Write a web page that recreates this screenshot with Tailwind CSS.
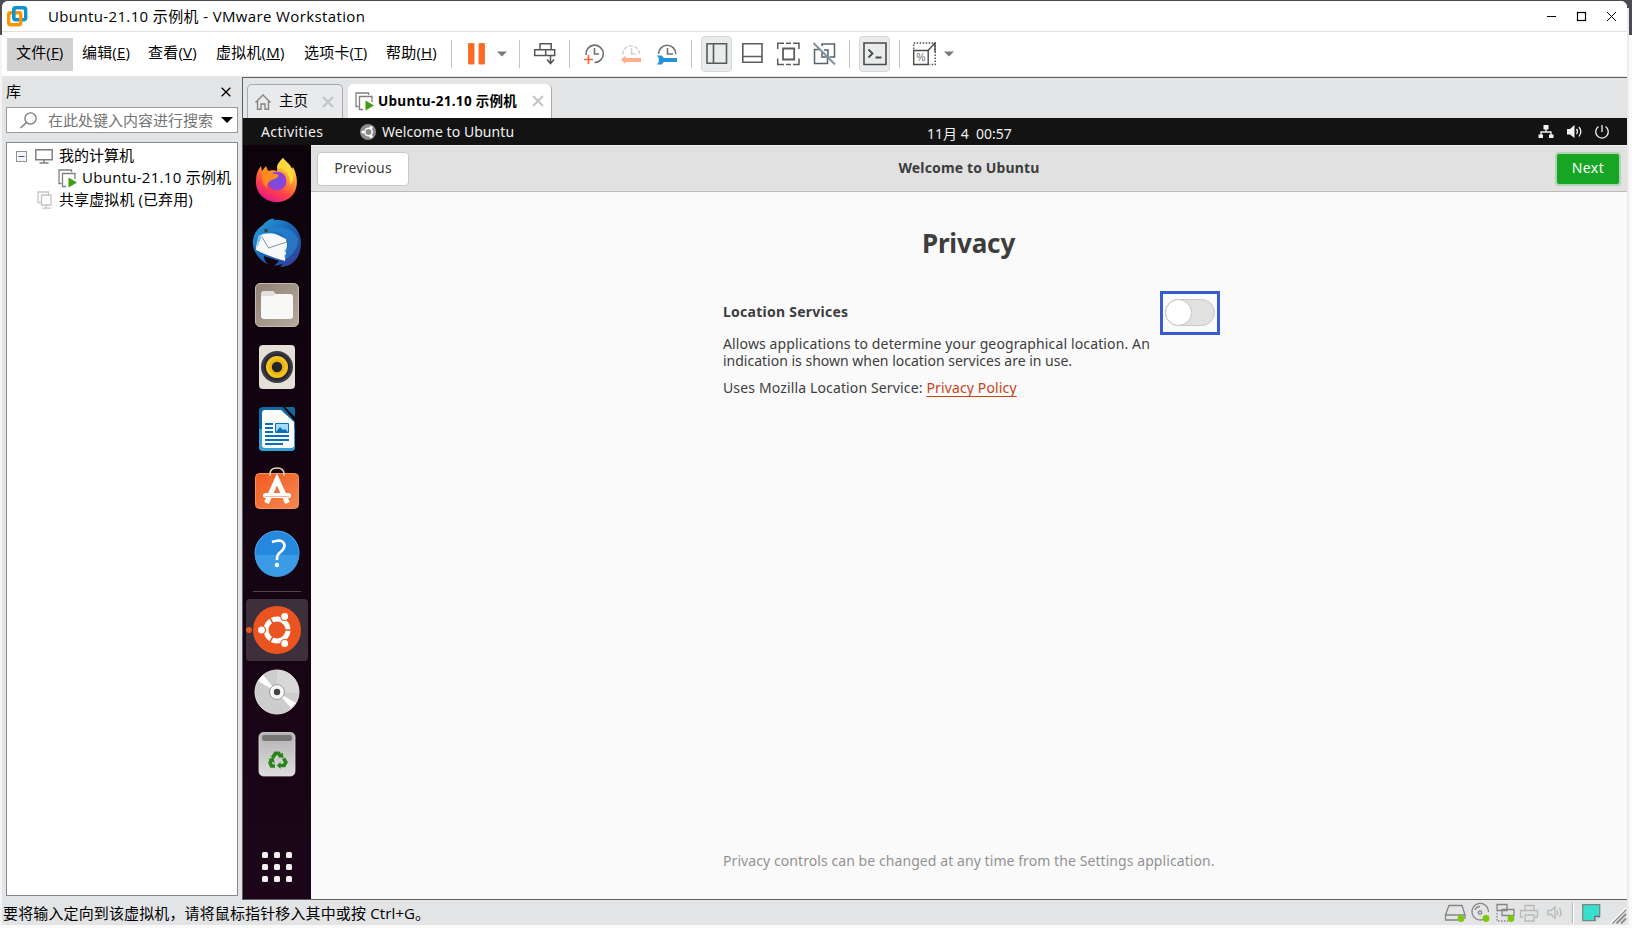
<!DOCTYPE html>
<html lang="zh-CN">
<head>
<meta charset="utf-8">
<title>Ubuntu-21.10 示例机 - VMware Workstation</title>
<script src="https://cdn.jsdelivr.net/npm/@tailwindcss/browser@4"></script>
</head>
<body class="w-[1632px] h-[928px] overflow-hidden bg-[#fafafa] font-['Open_Sans','Noto_Sans_CJK_SC',sans-serif] text-[15px] text-black">
<div class="relative flex h-[928px] w-[1632px] flex-col">
  <div class="absolute left-0 top-0 h-[35px] w-full bg-[#4c4a52]"></div>
  <div class="absolute left-0 top-[35px] h-[890px] w-[3px] bg-[#f4f4f5]"></div>
  <div class="absolute left-[1627px] top-[8px] h-[917px] w-[2px] bg-[#ececee]"></div>

  <div class="relative ml-[2px] mt-px flex h-[924px] w-[1625px] flex-col rounded-t-[6px] bg-[#e3e4e6]">
    <!-- title bar -->
    <header class="flex h-[31px] shrink-0 items-center rounded-t-[6px] border-b border-[#e0e0e0] bg-white">
      <svg class="ml-[5px] size-[21px]" viewBox="0 0 21 21" fill="none" stroke-width="3.4"><rect x="6.7" y="1.7" width="12" height="12" rx="2" stroke="#0e93d2"/><rect x="1.7" y="6.7" width="12" height="12" rx="2" stroke="#f89406"/><path d="M6.7 12V3.5" stroke="#0e93d2"/><path d="M10.5 6.7h3.2v4" stroke="#f89406" stroke-width="2"/></svg>
      <h1 class="ml-[20px] whitespace-nowrap text-[15px] leading-[20px] tracking-[0.37px]">Ubuntu-21.10 示例机 - VMware Workstation</h1>
      <svg class="ml-auto mr-[10px] h-[11px] w-[71px]" viewBox="0 0 71 11" fill="none" stroke="#000"><path d="M1 5.5h9"/><rect x="31.5" y="1.5" width="8" height="8" stroke-width="1.2"/><path d="m61 1 9 9m0-9-9 9"/></svg>
    </header>

    <!-- menu and toolbar -->
    <nav class="flex h-[44px] shrink-0 items-center bg-white whitespace-nowrap">
      <div class="ml-[5px] flex h-[33px] w-[66px] items-center bg-[#d1d1d1] pb-[3px] pl-[9px] tracking-[0.15px]">文件(<u>F</u>)</div>
      <div class="w-[66px] pb-[3px] pl-[9px] tracking-[0.15px]">编辑(<u>E</u>)</div>
      <div class="w-[68px] pb-[3px] pl-[9px] tracking-[0.2px]">查看(<u>V</u>)</div>
      <div class="w-[88px] pb-[3px] pl-[9px] tracking-[0.2px]">虚拟机(<u>M</u>)</div>
      <div class="w-[82px] pb-[3px] pl-[9px] tracking-[0.2px]">选项卡(<u>T</u>)</div>
      <div class="w-[70px] pb-[3px] pl-[9px] tracking-[0.2px]">帮助(<u>H</u>)</div>
      <i class="ml-[4px] h-[28px] w-px bg-[#c4c4c4]"></i>
      <svg class="ml-[14px] size-[24px]" viewBox="0 0 24 24" fill="#ff6a20"><path d="M2.500 1.500h5.500v20.500h-5.500zM13 1.500h5.500v20.500h-5.500z" stroke="#e97b43"/></svg>
      <svg class="ml-[7px] h-[6px] w-[10px]" viewBox="0 0 10 6"><path d="M0 .5h10L5 5.500z" fill="#7a7a7a"/></svg>
      <i class="ml-[12px] h-[28px] w-px bg-[#c4c4c4]"></i>
      <svg class="ml-[12px] size-[24px]" viewBox="0 0 24 24" fill="none" stroke="#555" stroke-width="1.500"><path d="M8 1.700h11.200v6H8zM2.700 7.700h11v5.800h-11zM13.700 7.700h9v5.800h-9zM18.500 14v7M15 17.500l3.500 4 3.500-4"/></svg>
      <i class="ml-[13px] h-[28px] w-px bg-[#c4c4c4]"></i>
      <svg class="ml-[12px] size-[24px]" viewBox="0 0 24 24" fill="none" stroke="#707070" stroke-width="1.600"><path d="M4 13a8.700 8.700 0 1 1 8.500 7.500M12.500 6v6H17"/><path d="M2 17.500h9M6.500 13v9" stroke="#f26a32" stroke-width="1.700"/></svg>
      <svg class="ml-[13px] size-[24px]" viewBox="0 0 24 24" fill="none" stroke="#d3d3d3" stroke-width="1.600"><path d="M3.500 12.500a8.500 8.500 0 0 1 17 0" stroke-dasharray="4 1.500"/><path d="M12.500 6v6H17"/><path d="M2 17.500 6.500 13.500v2.500H22v4H6.500V22z" fill="#ffae8b" stroke="none"/></svg>
      <svg class="ml-[12px] size-[24px]" viewBox="0 0 24 24" fill="none" stroke="#707070" stroke-width="1.600"><path d="M3.500 12a8.700 8.700 0 0 1 17.400 0M12.500 6v6H18"/><path d="M1.800 13.500h5l2 2.500H22v4H8.800l-2 2.500h-5l2-2.500v-4z" fill="#2593d5" stroke="none"/></svg>
      <i class="ml-[12px] h-[28px] w-px bg-[#c4c4c4]"></i>
      <div class="ml-[9px] flex h-[36px] w-[31px] items-center justify-center rounded-[4px] border border-[#d4d6d8] bg-[#e9ebed]"><svg class="size-[24px] shrink-0" viewBox="0 0 24 24" fill="none" stroke="#555a56" stroke-width="1.600"><path d="M2 1.800h19.500v19.500H2zM8.500 2v19"/></svg></div>
      <svg class="ml-[8px] size-[24px]" viewBox="0 0 24 24" fill="none" stroke="#5c5c5c" stroke-width="1.600"><path d="M2.800 1.800h19.200v18.500h-19.200zM3 14.500h19"/></svg>
      <svg class="ml-[12px] size-[24px]" viewBox="0 0 24 24" fill="none" stroke="#5c5c5c" stroke-width="1.500"><path d="M7 6.500h11.200v11H7z" stroke-width="1.800"/><path d="M10 1.200h5M10 22.500h5M1.700 7V1.200H8M17 1.200h6V7M23 16.500v6H17M8 22.500H1.700v-6"/></svg>
      <svg class="ml-[12px] size-[24px]" viewBox="0 0 24 24" fill="none" stroke="#56646c" stroke-width="1.500"><path d="M10 4V2h12.500v13h-5M8 7.500H2.500v14h13V16M10 10v5h6V8h-4"/><path d="m1.500 1 21.500 21.500" stroke="#8293a0" stroke-width="2"/></svg>
      <i class="ml-[13px] h-[28px] w-px bg-[#c4c4c4]"></i>
      <div class="ml-[9px] flex h-[36px] w-[31px] items-center justify-center rounded-[4px] border border-[#d4d6d8] bg-[#e9ebed]"><svg class="size-[24px] shrink-0" viewBox="0 0 24 24" fill="none" stroke="#4a4a4a" stroke-width="1.600"><path d="M1 1h22v21.500H1z"/><path d="m5.500 7.500 4 4-4 4M12.500 15.500h6" stroke-width="1.800"/></svg></div>
      <i class="ml-[9px] h-[28px] w-px bg-[#c4c4c4]"></i>
      <svg class="ml-[12px] size-[24px]" viewBox="0 0 24 24" fill="none" stroke="#4a4a4a" stroke-width="1.400"><path d="M1.700 8.500h14.500v14H1.700z"/><path d="M1.700 7V1h21.500v21.500H17.500" stroke-dasharray="1.500 1.500"/><path d="m16 8.500 7-7.500v9"/><text x="4.500" y="19" font-size="10" fill="#666" stroke="none" font-family="Liberation Sans">%</text></svg>
      <svg class="ml-[8px] h-[6px] w-[10px]" viewBox="0 0 10 6"><path d="M0 .5h10L5 5.500z" fill="#7a7a7a"/></svg>
    </nav>

    <main class="flex h-[824px] shrink-0">
      <!-- library panel -->
      <aside class="flex w-[240px] shrink-0 flex-col pl-[4px]">
        <div class="flex h-[31px] items-center justify-between pr-[11px]"><span class="pb-px leading-[20px]">库</span><svg class="size-[10px]" viewBox="0 0 10 10" stroke="#000" stroke-width="1.300"><path d="m.7.700 8.600 8.600m0-8.600L.7 9.300"/></svg></div>
        <div class="flex h-[26px] w-[232px] shrink-0 items-center border border-[#999] bg-white text-[#757575]">
          <svg class="ml-[13px] size-[17px]" viewBox="0 0 17 17" fill="none" stroke="#777" stroke-width="1.300"><circle cx="10.500" cy="6.500" r="5.600"/><path d="m6.500 10.500-6 5.500"/></svg>
          <span class="ml-[11px] whitespace-nowrap leading-[20px]">在此处键入内容进行搜索</span>
          <svg class="ml-[8px] h-[6px] w-[12px] shrink-0" viewBox="0 0 12 6"><path d="M0 0h12L6 6z" fill="#000"/></svg>
        </div>
        <div class="mt-[9px] flex h-[754px] w-[232px] shrink-0 flex-col border border-[#828790] bg-white pt-[2px] whitespace-nowrap">
          <div class="flex h-[22px] items-center">
            <svg class="ml-[9px] size-[11px]" viewBox="0 0 11 11" fill="#f5f5f5"><rect x=".5" y=".5" width="10" height="10" stroke="#919191"/><path d="M2.500 5.500h6" stroke="#3a56a5"/></svg>
            <svg class="ml-[8px] h-[15px] w-[18px]" viewBox="0 0 18 15" fill="none" stroke="#808080" stroke-width="1.500"><path d="M.8.800h16.400v10H.8zM9 11v3M4.500 14h9"/></svg>
            <span class="ml-[6px] pb-[2px]">我的计算机</span>
          </div>
          <div class="flex h-[22px] items-center">
            <svg class="ml-[51px] size-[19px]" viewBox="0 0 19 19" fill="none" stroke="#808080" stroke-width="1.300"><path d="M3.500 14.500H1V1h12.500v2M8 17.500H4.500V4.500H17V10"/><path d="M10.500 8.500 19 13.500l-8.500 5z" fill="#3f9c13" stroke="none"/></svg>
            <span class="ml-[5px] pb-[2px] tracking-[0.28px]">Ubuntu-21.10 示例机</span>
          </div>
          <div class="flex h-[22px] items-center">
            <svg class="ml-[30px] size-[18px]" viewBox="0 0 18 18" fill="none" stroke="#c4c4c4" stroke-width="1.300"><path d="M4 11.500H1V1h10.500v2.500M4.500 4H14v10H4.500zM9 14v3M5 17.200h9"/></svg>
            <span class="ml-[4px] pb-[2px] tracking-[0.1px]">共享虚拟机 (已弃用)</span>
          </div>
        </div>
      </aside>

      <!-- virtual machine pane -->
      <section class="mt-px flex w-[1385px] flex-col border-b border-l border-t border-[#5f5f63]">
        <div class="flex h-[40px] shrink-0 items-end">
          <div class="ml-[4px] flex h-[34px] w-[96px] items-center rounded-t-[5px] border border-b-0 border-[#a6a9ad] bg-[#e9eaec]">
            <svg class="ml-[7px] size-[16px] shrink-0" viewBox="0 0 16 16" fill="none" stroke="#858585" stroke-width="1.400"><path d="M.5 8.500 8 1l7.500 7.500M2.500 7v8.300h3.500V10h4v5.300h3.500V7"/></svg>
            <span class="ml-[8px] w-[29px] pb-[2px] text-[14.500px] whitespace-nowrap">主页</span>
            <svg class="ml-[14px] size-[12px] shrink-0" viewBox="0 0 12 12" stroke="#c2c4c6" stroke-width="2"><path d="m1 1 10 10M11 1 1 11"/></svg>
          </div>
          <div class="ml-[5px] flex h-[34px] w-[204px] items-center rounded-t-[5px] border-r border-[#a6a9ad] bg-white">
            <svg class="ml-[7px] size-[19px] shrink-0" viewBox="0 0 19 19" fill="none" stroke="#808080" stroke-width="1.300"><path d="M3.500 14.500H1V1h12.500v2M8 17.500H4.500V4.500H17V10"/><path d="M10.500 8.500 19 13.500l-8.500 5z" fill="#3f9c13" stroke="none"/></svg>
            <span class="ml-[4px] w-[142px] text-[13.500px] font-bold tracking-[0.3px] whitespace-nowrap">Ubuntu-21.10 示例机</span>
            <svg class="ml-[12px] size-[12px] shrink-0" viewBox="0 0 12 12" stroke="#c2c4c6" stroke-width="2"><path d="m1 1 10 10M11 1 1 11"/></svg>
          </div>
        </div>

        <div class="flex h-[781px] flex-col font-['Noto_Sans','Noto_Sans_CJK_SC',sans-serif] text-[14px] text-[#3d3d3d]">
          <div class="relative flex h-[27px] shrink-0 items-center bg-[#131313] text-[#f0f0f0] whitespace-nowrap">
            <span class="ml-[18px] w-[64px] tracking-[0.4px]">Activities</span>
            <svg class="ml-[35px] size-[16px]" viewBox="0 0 16 16" fill="none"><circle cx="8" cy="8" r="8" fill="#8b8b8b"/><circle cx="8.500" cy="8" r="3.700" stroke="#fff" stroke-width="1.500"/><circle cx="3" cy="8" r="1.600" fill="#fff"/><circle cx="11" cy="3.500" r="1.600" fill="#fff"/><circle cx="11" cy="12.500" r="1.600" fill="#fff"/></svg>
            <span class="ml-[6px] tracking-[0.06px]">Welcome to Ubuntu</span>
            <span class="absolute left-[684px] top-[6px] leading-[20px] whitespace-pre">11月 4  00:57</span>
            <svg class="ml-auto mr-[17px] h-[16px] w-[72px]" viewBox="0 0 72 16" fill="none" stroke="#f2f2f2" stroke-width="1.300"><path d="M5.500 1h5v4.500h-5zM.5 10.500h4.500v3.500H.5zM11 10.500h4.500v3.500H11z" fill="#f2f2f2" stroke="none"/><path d="M8 5v3M3 11V8h10v3"/><path d="M29 5h3l4.500-4v13L32 10.500h-3z" fill="#f2f2f2" stroke="none"/><path d="M38.500 5q2 2.500 0 5M41 3q3.500 4.500 0 9.500"/><path d="M60.500 2.500a6.300 6.300 0 1 0 7 0M64 1v7"/></svg>
          </div>
          <div class="flex h-[754px]">
            <!-- dock -->
            <div class="flex w-[68px] shrink-0 flex-col items-center bg-linear-to-b from-[#0d030b] to-[#1c0519] pt-[5px]">
              <svg class="size-[62px] shrink-0" viewBox="0 0 62 62"><defs><linearGradient id="ff" x1=".8" y1="0" x2=".3" y2="1"><stop stop-color="#fff44f"/><stop offset=".4" stop-color="#ff9a2b"/><stop offset=".7" stop-color="#ff4347"/><stop offset="1" stop-color="#e2158a"/></linearGradient><radialGradient id="fp"><stop stop-color="#6a52e8"/><stop offset="1" stop-color="#9a3fcf"/></radialGradient></defs><path d="M37 8c2 3 7 6 9 11l1-2c8 15 4 33-14 35-15 1-24-10-23-22 0-6 2-10 5-14l1 5 4-5 2 5c4-1 6-1 9 0 0-5 3-10 6-13z" fill="url(#ff)"/><circle cx="31" cy="31" r="9.500" fill="url(#fp)"/><path d="M17 21c4-2 8 1 11 3 4 0 6 1 3 4-3 2-6 1-8 4-2 2-3 4-1 7-6-5-7-10-5-18z" fill="#ff8a20"/><path d="M37 8c2 3 7 6 9 11 3 6 1 12-2 16 0-8-2-12-6-15-3-3-9-1-7-2 0-4 3-7 6-10z" fill="#ffd83c"/></svg>
              <svg class="size-[62px] shrink-0" viewBox="0 0 62 62"><defs><linearGradient id="tb" x1="0" y1="0" x2="1" y2="1"><stop stop-color="#2da7e0"/><stop offset=".45" stop-color="#1769b9"/><stop offset="1" stop-color="#393996"/></linearGradient></defs><path d="M17 13c3-4 8-7 12-6l-2 1.500c15-3 28 8 28 22.500 0 14-8 24-21 24l3-3-9 2 5-5-15-5c0 5 3 7 5 9-11-5-17-15-16-25 1-7 5-12 10-15z" fill="url(#tb)"/><path d="M10 38q0-9 5-15l2-1q10-2 15 1l8 4 1 6-2 16q-15-4-29-11z" fill="#f7f9fb"/><path d="m16 25 6.500 11 18-6" fill="none" stroke="#8a9299"/><path d="M18 21c8-4 16-1 22 5 3 4 0 8 2 10l-4 3 3 2-3 3 2 3c8-5 12-11 12-20-5-12-20-15-34-6z" fill="#2a83cf" opacity=".7"/><path d="m11 36 1-12 4-2-1 4z" fill="#79c7ee"/><circle cx="20" cy="18.500" r="1.700" fill="#3a3a3b"/></svg>
              <svg class="size-[62px] shrink-0" viewBox="0 0 62 62"><defs><linearGradient id="fi" x2="1" y2="1"><stop stop-color="#8f8175"/><stop offset="1" stop-color="#b7aa9d"/></linearGradient></defs><rect x="9.500" y="9.500" width="43" height="43" rx="4.500" fill="url(#fi)" stroke="#c4bcb2"/><path d="M15 20q0-3 3-3h9l3 3h14v8H15z" fill="#e4e0db"/><path d="M15 24q0-2 3-2h9l3-2h14q3 0 3 3v19q0 3-3 3H18q-3 0-3-3z" fill="#f8f8f7"/></svg>
              <svg class="size-[62px] shrink-0" viewBox="0 0 62 62"><rect x="13" y="9" width="36" height="44" rx="4" fill="#e4e0d8"/><circle cx="31" cy="31" r="16" fill="#3a3b45"/><circle cx="31" cy="31" r="13.500" fill="#282932"/><circle cx="31" cy="31" r="11" fill="#f4c522"/><circle cx="31" cy="31" r="8" fill="#e8b611"/><circle cx="31" cy="31" r="5.200" fill="#23242c"/></svg>
              <svg class="size-[62px] shrink-0" viewBox="0 0 62 62"><rect x="13" y="9" width="36" height="44" rx="4" fill="#0f6ba5"/><path d="M13 31h36v18q0 4-4 4H17q-4 0-4-4z" fill="#389fd3"/><path d="M36 8h14v17z" fill="#10050e"/><path d="M39 9h8q2 0 2 2v8z" fill="#126b9e"/><path d="M16 15q0-3 3-3h16l13 12v23q0 3-3 3H19q-3 0-3-3z" fill="#fafafa"/><path d="M19 26h8M19 30h8M19 34h8M19 38h24M19 42h24M19 46h18" stroke="#0870b8" stroke-width="2"/><path d="M29.500 25.500h13v9h-13z" fill="#a5d8f4" stroke="#0870b8"/><path d="m30 34 4-5 3 3 2-1 3 3z" fill="#0870b8"/></svg>
              <svg class="size-[62px] shrink-0" viewBox="0 -2 62 62"><defs><linearGradient id="sw" x2="1" y2="1"><stop stop-color="#f45a20"/><stop offset="1" stop-color="#f38751"/></linearGradient></defs><rect x="9.500" y="11.500" width="43" height="35" rx="4" fill="url(#sw)" stroke="#f7925f"/><path d="M24 14v-2q0-6 7-6t7 6v2" fill="none" stroke="#f3d7b4" stroke-width="1.500"/><path d="M20.500 41 31 17.500 41.500 41" fill="none" stroke="#fff" stroke-width="5"/><rect x="17" y="31" width="28" height="5" rx="2.500" fill="#fff"/><path d="M19 34.500h24" stroke="#f3a581" stroke-width=".8"/></svg>
              <svg class="size-[62px] shrink-0" viewBox="0 0 62 62"><circle cx="31" cy="31" r="22" fill="#2588df" stroke="#55acef"/><path d="M9 33h44a22 22 0 0 1-44 0z" fill="#3b9be6"/><path d="M26 20q11-4 12.500 3 0 4-4 7-4 3-3.500 8" fill="none" stroke="#fff" stroke-width="2.700"/><circle cx="31" cy="43" r="2.200" fill="#fff"/></svg>
              <i class="mt-[7px] h-px w-[48px] shrink-0 bg-[#514650]"></i>
              <svg class="mt-[7px] size-[62px] shrink-0 rounded-[4px] bg-[#3d303b]" viewBox="0 0 62 62"><circle cx="3" cy="31" r="3" fill="#e95420"/><circle cx="31" cy="31" r="24" fill="#e95420"/><circle cx="31" cy="31" r="11" fill="none" stroke="#fff" stroke-width="5"/><path d="M36 31h10M28.500 27 23 17.500M28.500 35 23 44.500" stroke="#e95420" stroke-width="1.500"/><g fill="#fff" stroke="#e95420" stroke-width="1.200"><circle cx="15.500" cy="31" r="4"/><circle cx="38.700" cy="17.500" r="4"/><circle cx="38.700" cy="44.500" r="4"/></g></svg>
              <svg class="size-[62px] shrink-0" viewBox="0 0 62 62"><circle cx="31" cy="31" r="22" fill="#cdcdcd" stroke="#e2e2e2"/><path d="M31 31V9a22 22 0 0 1 22 23z" fill="#d8d8d8"/><path d="M31 31 12 20l5-6zM31 31l19 11-5 5z" fill="#fff"/><circle cx="31" cy="31" r="7.500" fill="#f7f7f7" stroke="#a39a94"/><circle cx="31" cy="31" r="3.200" fill="#444"/></svg>
              <svg class="size-[62px] shrink-0" viewBox="0 0 62 62"><defs><linearGradient id="tr" x2="0" y2="1"><stop stop-color="#b2b2b2"/><stop offset="1" stop-color="#dedede"/></linearGradient></defs><rect x="13" y="9.500" width="36" height="43.500" rx="4.500" fill="url(#tr)" stroke="#e0e0e0" stroke-width=".8"/><rect x="16" y="12" width="30" height="6" rx="2.500" fill="#767876"/><g transform="translate(3.400 3.800) scale(.9)"><path d="m25.500 34.500 3.500-5h3.500l2 3M38 35l2.500 4.500-2 3.500H34M28.500 43.500h-4L23 40l1.500-3" fill="none" stroke="#288619" stroke-width="4"/><path d="m32 34 6 .5-1-6zM34.500 39v8l-4-4zM21 35.500l6-1 1 6z" fill="#288619"/></g></svg>
              <div class="mt-[67px] grid grid-cols-3 gap-[6px]">
                <i class="size-[6px] rounded-[1.500px] bg-[#f2f0ee]"></i><i class="size-[6px] rounded-[1.500px] bg-[#f2f0ee]"></i><i class="size-[6px] rounded-[1.500px] bg-[#f2f0ee]"></i>
                <i class="size-[6px] rounded-[1.500px] bg-[#f2f0ee]"></i><i class="size-[6px] rounded-[1.500px] bg-[#f2f0ee]"></i><i class="size-[6px] rounded-[1.500px] bg-[#f2f0ee]"></i>
                <i class="size-[6px] rounded-[1.500px] bg-[#f2f0ee]"></i><i class="size-[6px] rounded-[1.500px] bg-[#f2f0ee]"></i><i class="size-[6px] rounded-[1.500px] bg-[#f2f0ee]"></i>
              </div>
            </div>
            <!-- welcome window -->
            <div class="flex w-[1316px] flex-col bg-[#fafafa]">
              <div class="grid h-[47px] shrink-0 grid-cols-3 items-center border-b border-t border-b-[#bcbcbc] border-t-[#f4f4f4] bg-[#e1e1e1] px-[6px]">
                <div class="flex h-[34px] w-[92px] items-center justify-center rounded-[4px] border border-[#c8c8c8] bg-white pb-[2px] tracking-[0.2px]">Previous</div>
                <h2 class="pb-[2px] text-center font-bold tracking-[0.14px]">Welcome to Ubuntu</h2>
                <div class="flex h-[34px] w-[66px] items-center justify-center justify-self-end rounded-[4px] border-2 border-[#b2d4b4] bg-[#16a623] pb-[2px] text-white tracking-[0.4px]">Next</div>
              </div>
              <div class="flex h-[707px] flex-col pl-[412px] whitespace-nowrap">
                <h3 class="mt-[31px] w-[491px] text-center text-[26px] font-bold leading-[40px] tracking-[-0.15px]">Privacy</h3>
                <div class="mt-[28px] flex items-start">
                  <div class="w-[437px]">
                    <div class="mt-[11px] font-bold leading-[20px] tracking-[0.25px]">Location Services</div>
                    <p class="mt-[13px] leading-[17px]"><span class="tracking-[0.13px]">Allows applications to determine your geographical location. An</span><br>indication is shown when location services are in use.</p>
                    <p class="mt-[9px] leading-[20px] tracking-[0.14px]">Uses Mozilla Location Service: <a class="text-[#c7431a] underline underline-offset-[3px]">Privacy Policy</a></p>
                  </div>
                  <div class="h-[44px] w-[60px] border-[3px] border-[#385bcf] bg-[#fafafa] pl-[2px] pt-[5px]">
                    <div class="h-[27px] w-[50px] rounded-full border border-[#c8c8c8] bg-[#e1e1e1]"><div class="-ml-px -mt-px size-[27px] rounded-full border border-[#c4c4c4] bg-white"></div></div>
                  </div>
                </div>
                <p class="mb-[28px] mt-auto leading-[20px] text-[#929292] tracking-[0.075px]">Privacy controls can be changed at any time from the Settings application.</p>
              </div>
            </div>
          </div>
        </div>
      </section>
    </main>

    <!-- status bar -->
    <footer class="flex h-[25px] shrink-0 items-center">
      <span class="ml-px whitespace-nowrap leading-[20px] tracking-[0.13px]">要将输入定向到该虚拟机，请将鼠标指针移入其中或按 Ctrl+G。</span>
      <svg class="ml-auto h-[22px] w-[183px]" viewBox="0 0 183 22" fill="none" stroke="#858585" stroke-width="1.300"><path d="M1.500 13 5 3.500h13l3 9.500M1.500 13v5H15M1.500 13H21v4"/><path d="M39 17.500A8.300 8.300 0 1 1 44.500 10M31 8q1.500-3.500 5-3.500"/><circle cx="36" cy="10.500" r="1.700"/><path d="M53 2.500h10v6H53zM58 7.500h12v6H58z" fill="#e3e4e6"/><path d="M53 11v8h11" stroke-dasharray="1.500 1.500"/><g stroke="#b8b8b8"><path d="M81 8V3.500h9V8M79 15h-2.500V8.500h17V15H91M81 13h9v6h-9z"/><path d="M104 8.500h3L111 5v11l-4-3.500h-3zM113 8q1.500 2.500 0 5M115.500 6q3 4.500 0 9"/></g><g fill="#7cc90b" stroke="none"><circle cx="17" cy="16.500" r="3.400"/><circle cx="42" cy="16.500" r="3.400"/><circle cx="67" cy="16.500" r="3.400"/></g><path d="M128.500 1v20" stroke="#b0b0b0"/><path d="M129.500 1v20" stroke="#fff"/><path d="M138.700 2.700h17v11.500l-4.500 4.500h-12.500z" fill="#36e0cc" stroke="#7b8783"/><path d="M151 19v-4.500h5" fill="#eee" stroke="#667"/><path d="m168 21.500 14-14m-9.500 14 9.500-9.500m-5 9.500 5-5" stroke="#8d8d8d" stroke-width="1.800"/><path d="m166.500 21.500 15.500-15.500" stroke="#fff"/></svg>
    </footer>
  </div>
</div>
</body>
</html>
